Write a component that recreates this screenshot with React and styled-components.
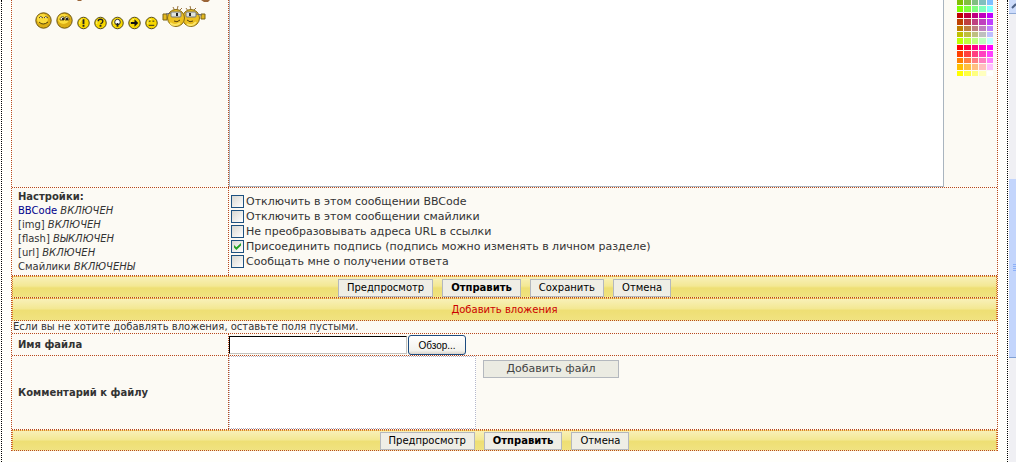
import React, { useState } from 'react';
import styled, { createGlobalStyle, css } from 'styled-components';

const GlobalStyle = createGlobalStyle`
  * { box-sizing: border-box; }

  body {
    margin: 0;
    overflow: hidden;
    background: #fffffb;
    color: #333;
    font-family: "DejaVu Sans", Verdana, sans-serif;
    font-size: 11px;
  }

  button, input, textarea { font: inherit; color: inherit; }
`;

const colors = {
  line: '#b8481c',
  orange: '#e08030',
  cell: '#fcfaf4',
  control: '#b4b8be',
};

// Layout
const Page = styled.div`
  display: flex;
  height: 100vh;
  overflow: hidden;
  padding-left: 1px;
`;

const Frame = styled.div`
  flex: 1;
  padding: 0 9px;
  border: 1px dotted #000;
  border-width: 0 1px;
`;

const Form = styled.form`
  border: 1px dotted ${colors.line};
  border-width: 0 1px;
`;

const Row = styled.div`
  display: flex;
  background: ${colors.cell};
  border-bottom: 1px dotted ${colors.line};
`;

const LabelCell = styled.div`
  flex: none;
  display: flex;
  flex-direction: column;
  justify-content: ${props => props.$middle ? 'center' : 'flex-start'};
  width: 217px;
  padding: ${props => props.$flush ? '0' : '2px 6px 1px'};
  border-right: 1px dotted ${colors.line};
  font-size: 10px;
  line-height: 14px;
`;

const Cell = styled.div`
  flex: 1;
  display: flex;
  align-items: flex-start;
  gap: ${props => props.$gap || 0}px;
`;

const FileCell = styled(Cell)`
  align-items: center;
  padding-top: 1px;
`;

const Bar = styled.div`
  display: flex;
  justify-content: center;
  gap: 9px;
  padding: ${props => props.$padding || '2px 0 0'};
  border: 1px dotted ${colors.orange};
  border-bottom-color: ${colors.line};
  background: linear-gradient(#f8f0b8, #f3e894 45%, #eedf74 55%, #f0e280);
  line-height: 15px;
`;

const BarTitle = styled.h2`
  margin: 0;
  color: #c00;
  font-size: 10px;
  font-weight: normal;
`;

const Note = styled.p`
  flex: 1;
  margin: 0;
  padding-left: 1px;
  font-size: 10px;
  line-height: 12px;
`;

// Controls
const Button = styled.button`
  height: 18px;
  padding: 0 8px;
  border: 1px solid ${colors.control};
  background: #efeee6;
  color: #000;
  font-size: 10px;
  line-height: 16px;
  font-weight: ${props => props.$strong ? 'bold' : 'normal'};

  ${props => props.$wide && css`
    width: 136px;
    margin-top: 4px;
    background: #ebebe2;
    color: #444;
    font-size: 11px;
  `}
`;

const BrowseButton = styled.button`
  width: 58px;
  height: 20px;
  padding: 0;
  border: 1px solid #1c4b80;
  border-radius: 3px;
  background: linear-gradient(#fff, #f3f3ee 80%, #d8d4cc);
  color: #000;
  font-family: "Liberation Sans", Arial, sans-serif;
  font-size: 10px;
`;

const FileInput = styled.input`
  width: 178px;
  height: 18px;
  border: 1px solid #c4c4c0;
  border-top-color: #000;
  border-left-color: #000;
  background: #fff;
  outline: none;
`;

const Message = styled.textarea`
  display: block;
  flex: 1;
  height: 187px;
  border: 1px solid #a9b4bf;
  border-top: 0;
  background: #fff;
  resize: none;
  outline: none;
`;

const Comment = styled.textarea`
  display: block;
  width: 247px;
  height: 73px;
  border: 1px dotted #b4b8cc;
  background: #fff;
  resize: none;
  outline: none;
`;

const Options = styled.div`
  padding: 6px 2px;
`;

const Option = styled.label`
  display: flex;
  align-items: center;
  gap: 2px;
  line-height: 15px;
`;

const Checkbox = styled.input`
  appearance: none;
  display: grid;
  place-content: center;
  width: 13px;
  height: 13px;
  margin: 0;
  border: 1px solid #1c5180;
  background: linear-gradient(135deg, #d8d8d2, #fff);

  &:checked::before {
    content: "";
    width: 7px;
    height: 7px;
    background: #21a121;
    clip-path: polygon(0 28%, 0 66%, 34% 100%, 100% 36%, 100% 0, 34% 60%);
  }
`;

const Link = styled.a`
  color: #00008b;
  text-decoration: none;
`;

// Palette
const PaletteCell = styled.div`
  flex: none;
  width: 53px;
  padding-left: 13px;
`;

const Palette = styled.div`
  display: grid;
  grid-template-columns: repeat(5, 1fr);
  gap: 1px;
  width: 36px;
  height: 76px;
`;

const Swatch = styled.button`
  padding: 0;
  border: 0;
  background: ${props => props.$color};
`;

const palette = [
  '#80bf00', '#80bf40', '#80bf80', '#80bfbf', '#80bfff',
  '#80ff00', '#80ff40', '#80ff80', '#80ffbf', '#80ffff',
  '#bf0000', '#bf0040', '#bf0080', '#bf00bf', '#bf00ff',
  '#bf4000', '#bf4040', '#bf4080', '#bf40bf', '#bf40ff',
  '#bf8000', '#bf8040', '#bf8080', '#bf80bf', '#bf80ff',
  '#bfbf00', '#bfbf40', '#bfbf80', '#bfbfbf', '#bfbfff',
  '#bfff00', '#bfff40', '#bfff80', '#bfffbf', '#bfffff',
  '#ff0000', '#ff0040', '#ff0080', '#ff00bf', '#ff00ff',
  '#ff4000', '#ff4040', '#ff4080', '#ff40bf', '#ff40ff',
  '#ff8000', '#ff8040', '#ff8080', '#ff80bf', '#ff80ff',
  '#ffbf00', '#ffbf40', '#ffbf80', '#ffbfbf', '#ffbfff',
  '#ffff00', '#ffff40', '#ffff80', '#ffffbf', '#ffffff',
];

// Smilies
const Smilies = styled.div`
  display: flex;
  align-items: flex-end;
  gap: 4px;
  padding: 3px 0 0 23px;

  svg { display: block; }
`;

const Smiley = styled.a`
  padding-bottom: ${props => props.$lift || 0}px;
`;

const Edge = styled.svg`
  display: block;
`;

// Bottom edge of the row of smilies that is scrolled out of view
const SmiliesEdge = () => (
  <Edge width="216" height="2">
    <path d="M65 0h5l-1 1h-3zM189 0h9l-2 2h-4z" fill="#9a6438" />
  </Edge>
);

const Face = ({ children }) => (
  <svg width="17" height="17" viewBox="0 0 17 17">
    <circle cx="8.5" cy="8.5" r="7.7" fill="#dcae14" stroke="#6e5612" />
    <ellipse cx="7.5" cy="7" rx="5.5" ry="5" fill="#fbdc3c" />
    {children}
  </svg>
);

const Badge = ({ children }) => (
  <svg width="13" height="14" viewBox="0 0 14 14">
    <circle cx="7" cy="7" r="6.2" fill="#f8d800" stroke="#4c4210" />
    <path d="M3 8a4 4 0 0 1 4-5" fill="none" stroke="#fff490" />
    {children}
  </svg>
);

const Twins = () => (
  <svg width="44" height="23" viewBox="0 0 44 23">
    <path d="M13 6l-2-4M15 5l1-4M17 6l3-3M26 6l-2-3M29 5l-1-4M31 6l3-3" stroke="#9a7440" fill="none" />
    <path d="M1 9h4v6H1zM39 9h4v5h-4z" fill="#e4b820" stroke="#7a6414" />
    <circle cx="29" cy="13" r="8.5" fill="#ecc020" stroke="#866a14" />
    <circle cx="14" cy="13" r="8.5" fill="#ecc020" stroke="#866a14" />
    <path d="M8 18q5 4 10 0M25 19q5 3 9-2" fill="none" stroke="#fbe468" strokeWidth="2" />
    <path d="M4 9l5-1M34 9l6 1" stroke="#667" />
    <rect x="9" y="7" width="10" height="5" rx="1" fill="#dfe4dc" stroke="#777" />
    <rect x="24" y="7" width="10" height="5" rx="1" fill="#dfe4dc" stroke="#777" />
    <path d="M14 8h2v3h-2zM27 8h2v3h-2z" fill="#222" />
    <path d="M12 16q3 2 6-1M25 15q3 3 6 1" fill="none" stroke="#5b430c" />
  </svg>
);

// Scroll bar
const Scroll = styled.div`
  flex: none;
  display: flex;
  flex-direction: column;
  width: 7px;
  margin-left: 1px;
  background: #f0f0f4;
`;

const ScrollArrow = styled.div`
  height: 14px;
  margin-bottom: 165px;
  background: #cddcfb;
  border-bottom: 1px solid #8ea9d6;
`;

const ScrollThumb = styled.div`
  display: flex;
  align-items: center;
  justify-content: flex-end;
  height: 179px;
  background: #c3d5fc;
  border-bottom: 1px solid #7f9fd4;
`;

const options = [
  { id: 'bbcode', label: 'Отключить в этом сообщении BBCode' },
  { id: 'smilies', label: 'Отключить в этом сообщении смайлики' },
  { id: 'urls', label: 'Не преобразовывать адреса URL в ссылки' },
  { id: 'signature', label: 'Присоединить подпись (подпись можно изменять в личном разделе)' },
  { id: 'notify', label: 'Сообщать мне о получении ответа' },
];

const App = () => {
  const [checked, setChecked] = useState({ signature: true });
  const toggle = id => setChecked({ ...checked, [id]: !checked[id] });

  return (
    <Page>
      <GlobalStyle />
      <Frame>
        <Form onSubmit={e => e.preventDefault()}>
          <Row>
            <LabelCell $flush>
              <SmiliesEdge />
              <Smilies>
                <Smiley href="#" $lift={1}>
                  <Face>
                    <path d="M4 6q1.500-3 4 0M9 6q1.500-3 4 0" fill="#fff" stroke="#54430c" />
                    <path d="M4 10q4 4 9 0" fill="none" stroke="#54430c" />
                  </Face>
                </Smiley>
                <Smiley href="#" $lift={1}>
                  <Face>
                    <path d="M4 8q0-4 4-3v3zM9 8V5q4-1 4 3z" fill="#fff" stroke="#6a5510" />
                    <path d="M6 6h2v2H6zM10 6h2v2h-2z" fill="#222" />
                  </Face>
                </Smiley>
                <Smiley href="#">
                  <Badge><path d="M6 3h2v5H6zM6 9h2v2H6z" fill="#222" /></Badge>
                </Smiley>
                <Smiley href="#">
                  <Badge>
                    <path d="M4.500 5q0-2 2.500-2t2.500 2T7 8" fill="none" stroke="#222" strokeWidth="1.500" />
                    <path d="M6 9h2v2H6z" fill="#222" />
                  </Badge>
                </Smiley>
                <Smiley href="#">
                  <Badge>
                    <circle cx="7" cy="6" r="3" fill="#fff" stroke="#222" />
                    <path d="M6 7h2v4H6z" fill="#222" />
                  </Badge>
                </Smiley>
                <Smiley href="#">
                  <Badge><path d="M3 6h4V3l4 4-4 4V8H3z" fill="#111" /></Badge>
                </Smiley>
                <Smiley href="#">
                  <Badge><path d="M4 5h2M8 5h2M4 9.500h6" stroke="#222" /></Badge>
                </Smiley>
                <Smiley href="#" $lift={2}><Twins /></Smiley>
              </Smilies>
            </LabelCell>
            <Cell>
              <Message aria-label="Сообщение" />
              <PaletteCell>
                <Palette>
                  {palette.map(color => <Swatch key={color} type="button" aria-label={color} $color={color} />)}
                </Palette>
              </PaletteCell>
            </Cell>
          </Row>

          <Row>
            <LabelCell>
              <b>Настройки:</b>
              <div><Link href="#">BBCode</Link> <em>ВКЛЮЧЕН</em></div>
              <div>[img] <em>ВКЛЮЧЕН</em></div>
              <div>[flash] <em>ВЫКЛЮЧЕН</em></div>
              <div>[url] <em>ВКЛЮЧЕН</em></div>
              <div>Смайлики <em>ВКЛЮЧЕНЫ</em></div>
            </LabelCell>
            <Options>
              {options.map(({ id, label }) => (
                <Option key={id}>
                  <Checkbox type="checkbox" checked={!!checked[id]} onChange={() => toggle(id)} />
                  {label}
                </Option>
              ))}
            </Options>
          </Row>

          <Bar>
            <Button type="button">Предпросмотр</Button>
            <Button $strong>Отправить</Button>
            <Button type="button">Сохранить</Button>
            <Button type="button">Отмена</Button>
          </Bar>

          <Bar $padding="3px 0">
            <BarTitle>Добавить вложения</BarTitle>
          </Bar>

          <Row>
            <Note>Если вы не хотите добавлять вложения, оставьте поля пустыми.</Note>
          </Row>

          <Row>
            <LabelCell $middle>
              <label htmlFor="filename"><b>Имя файла</b></label>
            </LabelCell>
            <FileCell $gap={1}>
              <FileInput id="filename" type="text" />
              <BrowseButton type="button">Обзор...</BrowseButton>
            </FileCell>
          </Row>

          <Row>
            <LabelCell $middle>
              <label htmlFor="filecomment"><b>Комментарий к файлу</b></label>
            </LabelCell>
            <Cell $gap={7}>
              <Comment id="filecomment" />
              <Button type="button" $wide>Добавить файл</Button>
            </Cell>
          </Row>

          <Bar $padding="1px 0 0">
            <Button type="button">Предпросмотр</Button>
            <Button $strong>Отправить</Button>
            <Button type="button">Отмена</Button>
          </Bar>
        </Form>
      </Frame>

      <Scroll>
        <ScrollArrow>
          <svg width="7" height="12" viewBox="0 0 7 12">
            <path d="M3 8l4-4" stroke="#4d6185" strokeWidth="2" />
          </svg>
        </ScrollArrow>
        <ScrollThumb>
          <svg width="4" height="8" viewBox="0 0 4 8">
            <path d="M1 .5h3M1 2.500h3M1 4.500h3M1 6.500h3" stroke="#8cb0f8" />
          </svg>
        </ScrollThumb>
      </Scroll>
    </Page>
  );
};

export default App;
